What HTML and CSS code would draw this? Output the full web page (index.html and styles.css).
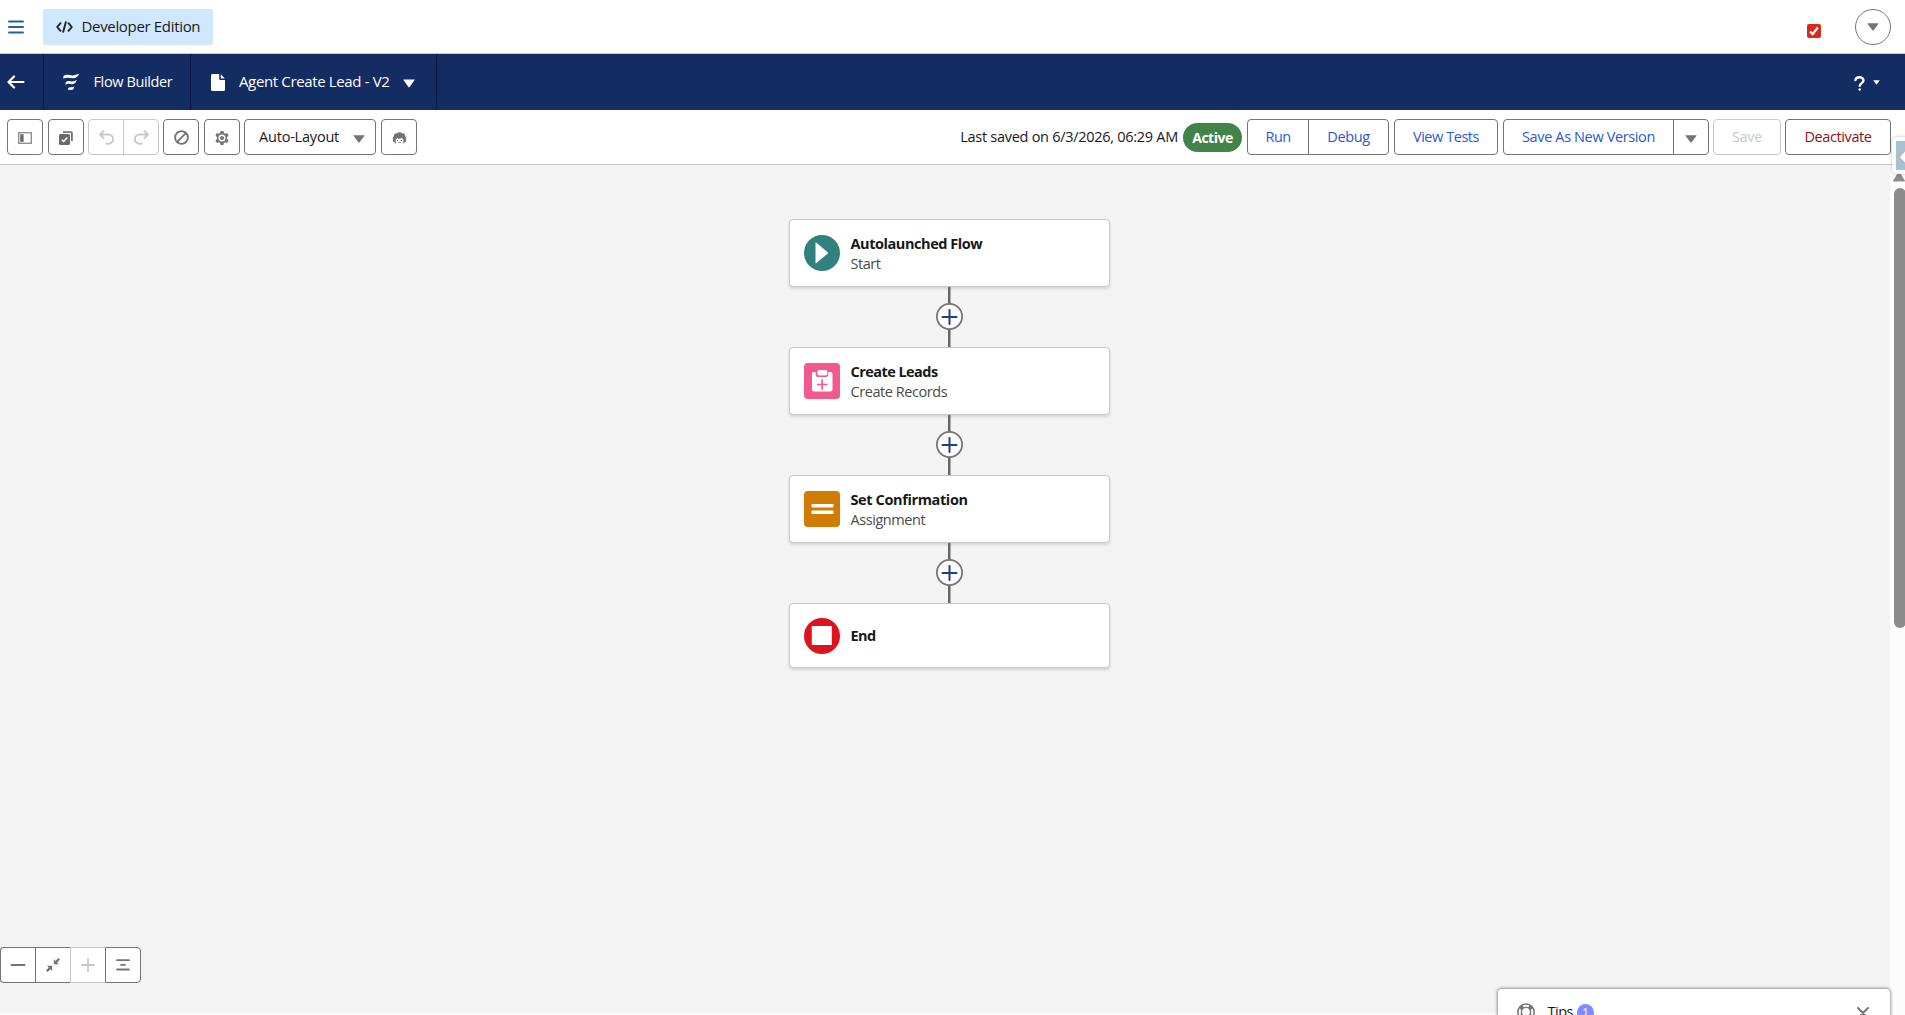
FILE: index.html
```html
<!DOCTYPE html>
<html lang="en">
<head>
<meta charset="utf-8">
<title>Flow Builder</title>
<link rel="stylesheet" href="styles.css">
</head>
<body>
<header class="topbar">
  <svg class="menu" width="16" height="14" viewBox="0 0 16 14" stroke="#2a5caa" stroke-width="2" stroke-linecap="round"><path d="M1 1.500h14M1 7h14M1 12.500h14"/></svg>
  <div class="edition">
    <svg width="17" height="12" viewBox="0 0 17 12" fill="none" stroke="#222" stroke-width="1.900" stroke-linecap="round" stroke-linejoin="round"><path d="M4.500 2.200L1.200 6l3.300 3.800M12.500 2.200L15.800 6l-3.300 3.800M9.800 1.200L7.200 10.800"/></svg>
    <span class="t-edition">Developer Edition</span>
  </div>
  <svg class="check" width="14" height="14" viewBox="0 0 14 14"><rect width="14" height="14" rx="2" fill="#d92b1c"/><path d="M3 7.500l2.700 2.600L10.800 3.500" fill="none" stroke="#fff" stroke-width="2.100"/></svg>
  <div class="avatar"><svg width="12" height="8" viewBox="0 0 12 8"><path d="M1 .3h10q.8 0 .3.800L6.600 7.200q-.6.700-1.200 0L.6 1.100Q.2.300 1 .3z" fill="#747474"/></svg></div>
</header>
<nav class="navbar">
  <div class="nav-back"><svg width="18" height="14" viewBox="0 0 18 14" fill="none" stroke="#fff" stroke-width="2.200" stroke-linecap="round" stroke-linejoin="round"><path d="M16.500 7H1.800M7 1.500L1.500 7 7 12.500"/></svg></div>
  <div class="nav-app">
    <svg width="17" height="18" viewBox="0 0 17 18" fill="#fff"><path d="M.4 3.100C2.500 1.100 5 1.500 8 2.200c3 .9 5-.8 8.200-1.500-1.200 2.900-3.300 4.700-6.300 4.500C6.500 4.900 4 3.900.4 5.800zM2.600 9.400c2-1.700 3.900-1.400 5.600-1 2.200.5 3.400-.7 5.700-1.300-1 2.800-2.600 4.200-4.800 4.100-2.500-.1-4-1.100-6.500.7zM5.200 15c1.200-1.100 2.300-.9 3.300-.7 1 .2 1.700-.3 2.900-.7-.5 2.300-1.400 3.500-2.800 3.500-1.400 0-2-.7-3.400.3z"/></svg>
    <span class="t-app">Flow Builder</span>
  </div>
  <div class="nav-flow">
    <svg width="14" height="17" viewBox="0 0 14 17" fill="#fff"><path d="M1.500 0h6.700v4.800q0 1.200 1.200 1.200H14v9.500q0 1.500-1.500 1.500h-11Q0 17 0 15.500v-14Q0 0 1.500 0zM9.800.200L13.800 4.400H9.800z"/></svg>
    <span class="t-flow">Agent Create Lead - V2</span>
    <svg class="caret" width="12" height="9" viewBox="0 0 12 9"><path d="M.6.500h10.800q.6 0 .2.600L6.600 8q-.6.800-1.200 0L.4 1.100Q0 .5.600.5z" fill="#fff"/></svg>
  </div>
  <div class="help">
    <svg width="11" height="15" viewBox="0 0 11 15" fill="none" stroke="#fff" stroke-width="2.400" stroke-linecap="round"><path d="M1.400 4.100C1.700 2.300 3.300 1.300 5.400 1.300c2.300 0 4.100 1.200 4.100 3.200 0 2.500-3.700 2.700-3.700 5.200"/><path d="M5.700 13.500h.1"/></svg>
    <svg width="7" height="5" viewBox="0 0 7 5"><path d="M.2.200h6.600L3.500 4.700z" fill="#fff"/></svg>
  </div>
</nav>
<section class="toolbar">
  <div class="btn icon"><svg width="14" height="12" viewBox="0 0 14 12"><rect x=".7" y=".7" width="12.600" height="10.600" fill="#fff" stroke="#8a8a8a" stroke-width="1.300"/><path d="M2.200 2.200h3.400v7.600H2.200z" fill="#666"/></svg></div>
  <div class="btn icon"><svg width="14" height="14" viewBox="0 0 14 14"><path d="M4 1.100h8q.9 0 .9.900v8" fill="none" stroke="#747474" stroke-width="1.900"/><rect y="3" width="11" height="11" rx="1.500" fill="#696969"/><path d="M2.800 8.800l1.900 1.800 3.700-4" fill="none" stroke="#fff" stroke-width="1.400"/></svg></div>
  <div class="group disabled">
    <div><svg width="15" height="15" viewBox="0 0 15 15" fill="none" stroke="#c9c9c9" stroke-width="1.900" stroke-linecap="round" stroke-linejoin="round"><path d="M4.500 1L1 4.500 4.500 8M1.300 4.500H9.500a4.600 4.600 0 0 1 0 9.200H7.500"/></svg></div>
    <div><svg width="15" height="15" viewBox="0 0 15 15" fill="none" stroke="#c9c9c9" stroke-width="1.900" stroke-linecap="round" stroke-linejoin="round"><path d="M10.500 1L14 4.500 10.500 8M13.700 4.500H5.500a4.600 4.600 0 0 0 0 9.200H7.500"/></svg></div>
  </div>
  <div class="btn icon"><svg width="15" height="15" viewBox="0 0 15 15" fill="none" stroke="#747474" stroke-width="1.900"><circle cx="7.500" cy="7.500" r="6.400"/><path d="M3.200 11.800l8.600-8.600"/></svg></div>
  <div class="btn icon"><svg width="14" height="14" viewBox="0 0 14 14"><path d="M5.600 0h2.800l.5 2 1.200.7 2-.6 1.500 2.500-1.500 1.500v1.800l1.500 1.500-1.500 2.500-2-.6-1.200.7-.5 2H5.600l-.5-2-1.200-.7-2 .6L.4 9.400l1.500-1.500V6.100L.4 4.600l1.500-2.500 2 .6L5.100 2z" fill="#747474"/><circle cx="7" cy="7" r="2.800" fill="#747474" stroke="#fff" stroke-width="1.500"/></svg></div>
  <div class="btn layout"><span class="t-layout">Auto-Layout</span><svg width="12" height="8" viewBox="0 0 12 8"><path d="M.7.200h10.600q.5 0 .2.500L6.600 7.200q-.6.700-1.200 0L.5.700Q.2.200.7.200z" fill="#747474"/></svg></div>
  <div class="btn icon"><svg width="15" height="12" viewBox="0 0 15 12"><path d="M2 4C1.700 2 3.500.8 4.900 1.400 6-.2 9-.2 10.100 1.400c1.500-.6 3.200.6 2.900 2.600 1.300.8 1.500 2.400.8 3.300.9 1.300.2 2.600-.8 2.800-.5.900-1.300 1.500-2.200 1.500H4.200C3.300 11.600 2.500 11 2 10.100 1 9.900.3 8.600 1.200 7.300.5 6.400.7 4.800 2 4z" fill="#747474"/><path d="M3.700 7.700l1.700-1.600 1.200.8 3.500-1 1.300 1.800v2.600q0 1.700-1.400 1.700H5.100q-1.400 0-1.400-1.700z" fill="#fff"/><path d="M5 7.900h1.300v1.200H5zM8.700 7.900h1.300v1.200H8.700zM6.300 10h2.400v.7H6.300z" fill="#747474"/></svg></div>
  <span class="saved t-saved">Last saved on 6/3/2026, 06:29 AM</span>
  <span class="pill t-pill">Active</span>
  <div class="group run"><div class="w-run t-run">Run</div><div class="t-debug">Debug</div></div>
  <div class="btn w-tests t-tests">View Tests</div>
  <div class="group saveas"><div class="w-saveas t-saveas">Save As New Version</div><div><svg width="12" height="8" viewBox="0 0 12 8"><path d="M.7.200h10.600q.5 0 .2.500L6.600 7.200q-.6.700-1.200 0L.5.700Q.2.200.7.200z" fill="#747474"/></svg></div></div>
  <div class="btn w-save off t-save">Save</div>
  <div class="btn w-deact t-deact">Deactivate</div>
</section>
<main class="canvas">
  <div class="flow">
    <div class="node">
      <svg width="36" height="36" viewBox="0 0 36 36"><circle cx="18" cy="18" r="18" fill="#31827c"/><path d="M11.500 8.200q0-1 .9-.4l11 9.300q.9.900 0 1.800l-11 9.200q-.9.600-.9-.4z" fill="#fff"/></svg>
      <div><div class="title t-n1">Autolaunched Flow</div><div class="sub t-s1">Start</div></div>
    </div>
    <div class="link"><svg width="27" height="27" viewBox="0 0 27 27"><circle cx="13.500" cy="13.500" r="12.600" fill="#fff" stroke="#747474" stroke-width="1.800"/><path d="M6.500 14h14M13.500 7v14" stroke="#1b3f86" stroke-width="2" stroke-linecap="round"/></svg></div>
    <div class="node">
      <svg width="36" height="36" viewBox="0 0 36 36"><rect width="36" height="36" rx="4" fill="#f2598c"/><path d="M9.500 9h2.200v2.200q0 2.800 2.800 2.800h7q2.800 0 2.800-2.800V9h2.200q2 0 2 2v15.500q0 2-2 2H10q-2 0-2-2V11q0-2 1.500-2z" fill="#fff"/><rect x="13.300" y="7" width="10" height="5.500" rx="1.800" fill="#fff"/><path d="M13 21.500h10.500M18.200 16.300v10.400" stroke="#f2598c" stroke-width="1.700"/></svg>
      <div><div class="title t-n2">Create Leads</div><div class="sub t-s2">Create Records</div></div>
    </div>
    <div class="link"><svg width="27" height="27" viewBox="0 0 27 27"><circle cx="13.500" cy="13.500" r="12.600" fill="#fff" stroke="#747474" stroke-width="1.800"/><path d="M6.500 14h14M13.500 7v14" stroke="#1b3f86" stroke-width="2" stroke-linecap="round"/></svg></div>
    <div class="node">
      <svg width="36" height="36" viewBox="0 0 36 36"><rect width="36" height="36" rx="4" fill="#d17c00"/><rect x="7.500" y="13" width="22" height="3.400" rx=".8" fill="#fff"/><rect x="7.500" y="19.600" width="22" height="3.400" rx=".8" fill="#fff"/></svg>
      <div><div class="title t-n3">Set Confirmation</div><div class="sub t-s3">Assignment</div></div>
    </div>
    <div class="link"><svg width="27" height="27" viewBox="0 0 27 27"><circle cx="13.500" cy="13.500" r="12.600" fill="#fff" stroke="#747474" stroke-width="1.800"/><path d="M6.500 14h14M13.500 7v14" stroke="#1b3f86" stroke-width="2" stroke-linecap="round"/></svg></div>
    <div class="node end">
      <svg width="36" height="36" viewBox="0 0 36 36"><circle cx="18" cy="18" r="18" fill="#dc141f"/><rect x="7.800" y="8" width="20" height="19" rx=".6" fill="#fff"/></svg>
      <div class="title t-n4">End</div>
    </div>
  </div>
  <div class="zoombar">
    <div><svg width="16" height="14" viewBox="0 0 16 14" stroke="#747474" stroke-width="2" stroke-linecap="round"><path d="M1.500 7h13"/></svg></div>
    <div><svg width="14" height="14" viewBox="0 0 14 14" fill="#747474"><path d="M7.800 1.200v5h5l-1.600-1.700L14 1.600 12.400 0 9.500 2.900zM1 7.800h5.200v5.200l-1.700-1.700L1.600 14 0 12.400l2.800-2.900z"/></svg></div>
    <div class="dim"><svg width="14" height="14" viewBox="0 0 14 14" stroke="#c9c9c9" stroke-width="1.800" stroke-linecap="round"><path d="M1 7h12M7 1v12"/></svg></div>
    <div><svg width="14" height="14" viewBox="0 0 14 14" stroke="#747474" stroke-width="1.800" stroke-linecap="round"><path d="M1 2.200h12M5 6.800h4M1 11.500h12"/></svg></div>
  </div>
</main>
<aside class="scroll">
  <svg width="12" height="10" viewBox="0 0 12 10"><path d="M5 .8q1-1.200 2 0l4.700 7.400q.6 1.300-.7 1.300H1q-1.300 0-.7-1.300z" fill="#8b8b8b"/></svg>
  <div class="thumb"></div>
</aside>
<div class="dock"><div><svg width="9" height="29" viewBox="0 0 9 29"><path d="M4 16L9 10.500v11z" fill="#fff"/></svg></div></div>
<div class="tips">
  <svg width="18" height="18" viewBox="0 0 18 18" fill="none" stroke="#747474"><circle cx="9" cy="9" r="8.100" stroke-width="1.500"/><circle cx="9" cy="9" r="4.600" stroke-width="1.400"/><path d="M3.600 3.600l2.200 2.200M14.400 3.600l-2.200 2.200M3.600 14.400l2.200-2.200M14.400 14.400l-2.200-2.200" stroke-width="4"/></svg>
  <span class="t-tips">Tips</span><span class="badge">1</span>
  <svg class="close" width="12" height="12" viewBox="0 0 12 12" stroke="#747474" stroke-width="1.900" stroke-linecap="round"><path d="M1 1l10 10M11 1L1 11"/></svg>
</div>
</body>
</html>
```
FILE: styles.css
```css
* { box-sizing: border-box; }
body {
  margin: 0;
  width: 1905px;
  height: 1015px;
  overflow: hidden;
  position: relative;
  display: grid;
  grid-template: 54px 56px 55px 848px 1fr / 1890px 1fr;
  background: #fcfcfc;
  color: #181818;
  font: 14.5px/20px "Segoe UI", "Open Sans", "Noto Sans", sans-serif;
  white-space: nowrap;
}
svg { display: block; flex: none; }

.topbar, .navbar, .toolbar { grid-column: 1 / 3; display: flex; }

.topbar { background: #fff; border-bottom: 1px solid #c9c9c9; padding-left: 8px; }
.menu { margin: 20px 19px 0 0; }
.edition {
  width: 170px; height: 36px; margin-top: 9px;
  background: #d0e8ff; border-radius: 2px;
  display: flex; align-items: center; gap: 9px; padding-left: 12.500px;
  font-weight: 500;
}
.t-edition { font-size: 15px; letter-spacing: -.33px; margin-top: -2px; }
.check { margin: 24px 34px 0 auto; }
.avatar {
  width: 36px; height: 36px; margin: 9px 14px 0 0;
  border: 1px solid #747474; border-radius: 50%;
  display: flex; align-items: center; justify-content: center;
}

.navbar { background: #132c62; color: #fff; }
.navbar > div { display: flex; align-items: center; }
.nav-back { width: 44px; border-right: 1px solid #07163c; padding-left: 7px; }
.nav-app { width: 147px; border-right: 1px solid #07163c; padding-left: 19px; gap: 13.500px; }
.nav-flow { width: 246px; border-right: 1px solid #07163c; padding-left: 20px; }
.nav-flow .t-flow { margin: -2px 0 0 14px; font-size: 15px; letter-spacing: -.36px; }
.t-app { letter-spacing: -.38px; }
.nav-flow .caret { margin: 3px 21px 0 auto; }
.help { margin-left: auto; padding-right: 25px; gap: 8px; }
.help svg:first-child { margin-top: 3px; }

.toolbar { background: #fff; border-bottom: 1px solid #c9c9c9; padding: 9px 14px 0 7px; }
.btn, .group { height: 36px; border: 1px solid #747474; border-radius: 4px; display: flex; flex: none; }
.btn { align-items: center; justify-content: center; margin-right: 5px; padding-bottom: 1px; }
.group > div { flex: 1; display: flex; align-items: center; justify-content: center; padding-bottom: 1px; }
.group > div + div { border-left: 1px solid #747474; }
.icon { width: 36px; padding: 2px 0 1px; }
.group.disabled { width: 71px; border-color: #c9c9c9; margin: 0 4px 0 -1px; }
.group.disabled > div { padding: 2px 0 1px; }
.group.disabled > div + div { border-color: #c9c9c9; }
.layout { width: 132px; justify-content: space-between; padding: 0 10.500px 1px 14px; margin-left: -1px; }
.layout svg, .saveas svg { margin-top: 4px; }
.t-layout { letter-spacing: -.2px; }
.saved { margin: 8px 5px 0 auto; }
.t-saved { letter-spacing: -.28px; }
.pill {
  width: 59px; height: 29px; margin: 4px 5px 0 0; border-radius: 15px;
  background: #41834a; color: #fff; font-size: 14px; font-weight: 700; text-align: center; line-height: 30px;
  letter-spacing: -.5px;
}
.run, .w-tests, .saveas, .w-deact { color: #2c58cf; }
.run { width: 142px; margin-right: 5px; }
.group > .w-run { flex: 0 0 60px; }
.w-tests { width: 104px; }
.saveas { width: 206px; margin-right: 4px; }
.group > .w-saveas { flex: 0 0 169px; }
.w-save { width: 68px; margin-right: 4px; }
.off { color: #c9c9c9; border-color: #c9c9c9; }
.w-deact { width: 106px; margin: 0; color: #8a1018; }
.t-run { letter-spacing: -.6px; }
.t-debug, .t-deact { letter-spacing: -.4px; }
.t-tests { letter-spacing: -.45px; }
.t-saveas { letter-spacing: -.37px; }
.t-save { letter-spacing: -.3px; }

.canvas { background: #f3f3f3; display: flex; flex-direction: column; justify-content: space-between; padding: 54px 0 30px; }
.flow { width: 321px; margin-left: 789px; }
.node {
  height: 68px; padding: 15px 0 0 13.500px;
  display: flex; gap: 11px;
  background: #fff; border: 1px solid #c9c9c9; border-radius: 4px;
  box-shadow: 0 2px 3px rgba(0, 0, 0, .13);
}
.node > div { margin-top: -1px; }
.title { font-weight: 700; line-height: 20px; letter-spacing: -.44px; }
.sub { color: #4a4a4a; line-height: 20px; letter-spacing: -.44px; }
.t-n2, .t-n4 { letter-spacing: -.55px; }
.t-n3 { letter-spacing: -.38px; }
.node.end { height: 65px; padding-top: 14px; }
.node.end .title { margin-top: 8px; }
.link {
  height: 60px; padding-top: 16px; display: flex; justify-content: center;
  background: linear-gradient(#666, #666) center / 2.500px 100% no-repeat;
}

.zoombar { width: 141px; height: 36px; display: flex; background: #fff; border-radius: 5px; }
.zoombar > div {
  flex: 1; border: 1px solid #747474; border-right-width: 0;
  display: flex; align-items: center; justify-content: center;
}
.zoombar > div:first-child { border-radius: 4px 0 0 4px; }
.zoombar > div:last-child { border-right-width: 1px; border-radius: 0 4px 4px 0; }
.zoombar > .dim { border-color: #c9c9c9; }

.scroll { padding: 7px 0 0 3px; overflow: hidden; }
.thumb { width: 12px; height: 440px; margin: 6px 0 0 1px; background: #8b8b8b; border-radius: 6px; }

.dock {
  position: absolute; left: 1892px; top: 137px; width: 18px; height: 37px;
  padding: 4px; background: rgba(255, 255, 255, .8); border-radius: 5px; box-shadow: 0 0 3px rgba(0, 0, 0, .3);
}
.dock > div { background: #a9c0cf; width: 14px; height: 29px; }

.tips {
  position: absolute; left: 1498px; top: 989px; width: 392px; height: 40px;
  background: #fff; border-radius: 4px; box-shadow: 0 0 3px 1px rgba(0, 0, 0, .4);
  display: flex; padding: 14px 21px 0 18.500px;
}
.t-tips { margin: -1px 4px 0 13px; letter-spacing: -.5px; }
.badge {
  width: 17px; height: 17px; margin-top: 1px; border-radius: 50%;
  background: #7f8cff; color: #fff; font-size: 12px; line-height: 17px; text-align: center;
}
.close { margin: 4px 0 0 auto; }
```
